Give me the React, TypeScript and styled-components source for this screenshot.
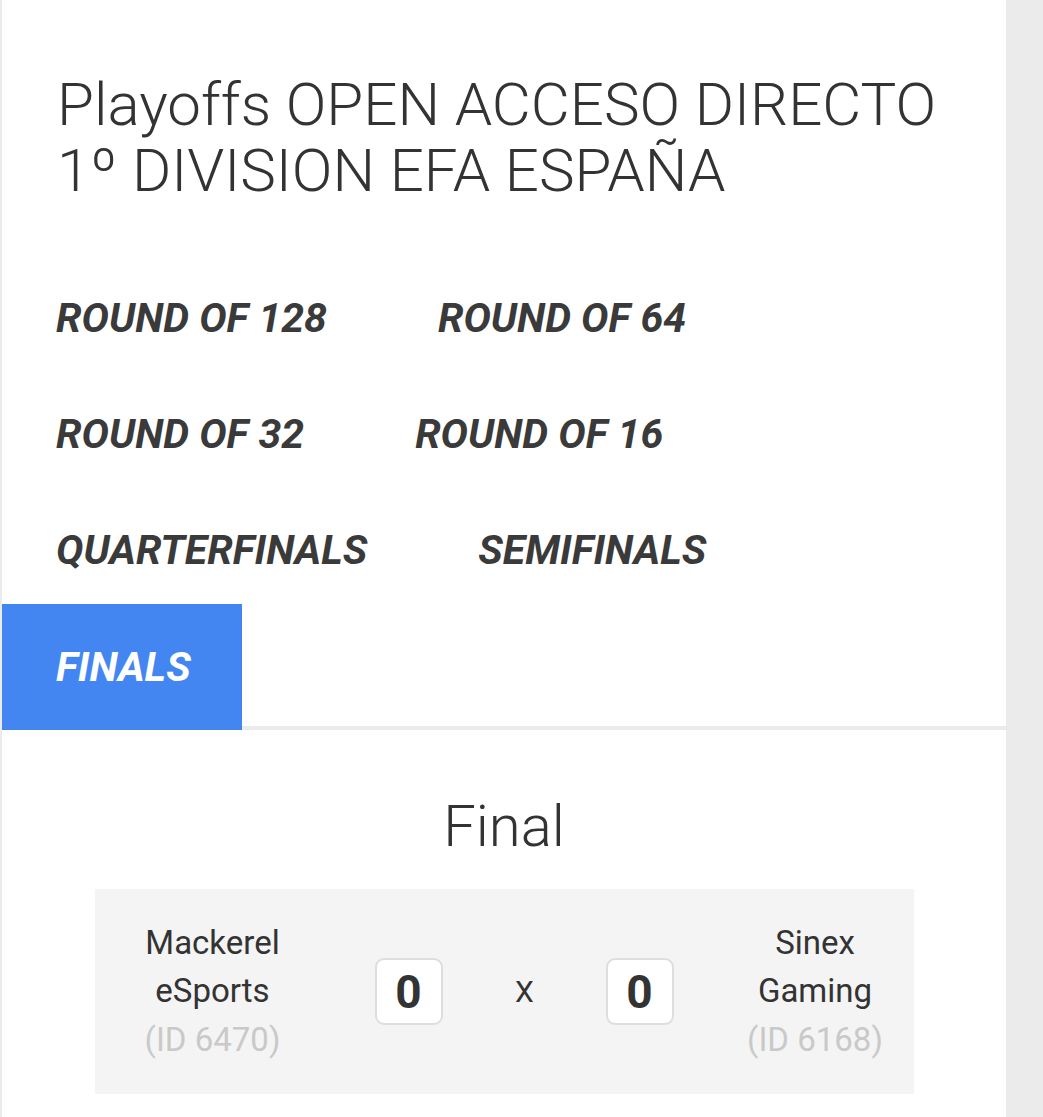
import { FC } from "react";
import styled, { createGlobalStyle } from "styled-components";

const GlobalStyle = createGlobalStyle`
  html, body {
    margin: 0;
    padding: 0;
    background: #ebebeb;
  }
  body {
    font-family: Roboto, "Liberation Sans", Arial, sans-serif;
    color: #333;
  }
`;

const Page = styled.div`
  width: 1006px;
  min-height: 1117px;
  background: #fff;
  border-left: 2px solid #ebebeb;
  box-sizing: border-box;
`;

const Title = styled.h1`
  margin: 0;
  padding: 72px 40px 0 55px;
  font-size: 60px;
  font-weight: 300;
  line-height: 66px;
  color: #333;
`;

const TabList = styled.div`
  display: flex;
  flex-direction: column;
  margin-top: 56px;
  padding-bottom: 2px;
`;

const Divider = styled.div`
  height: 4px;
  background: #ebebeb;
`;

const Row = styled.div`
  display: flex;
`;

const Tab = styled.div<{ $active?: boolean }>`
  display: flex;
  align-items: center;
  box-sizing: border-box;
  height: ${(p) => (p.$active ? "126px" : "116px")};
  margin: ${(p) => (p.$active ? "-4px 0 -6px 0" : "0")};
  padding: 0 ${(p) => (p.$active ? 51 : 57)}px 0 54px;
  font-size: 41px;
  font-weight: 700;
  font-style: italic;
  color: ${(p) => (p.$active ? "#fff" : "#3a3a3a")};
  background: ${(p) => (p.$active ? "#4386f2" : "transparent")};
  position: relative;
  z-index: 1;
  cursor: pointer;
`;

const Section = styled.section`
  padding: 62px 0 0;
  display: flex;
  flex-direction: column;
  align-items: center;
`;

const StageName = styled.h2`
  margin: 0;
  font-size: 58px;
  font-weight: 300;
  line-height: 68px;
  color: #333;
`;

const Match = styled.div`
  margin-top: 29px;
  width: 819px;
  height: 205px;
  background: #f4f4f4;
  display: grid;
  grid-template-columns: 236px 156px 76px 154px 197px;
  align-items: center;
  justify-items: center;
`;

const Team = styled.div`
  text-align: center;
  font-size: 33px;
  line-height: 48.5px;
  color: #333;
`;

const TeamId = styled.div`
  color: #c9c9c9;
`;

const Score = styled.div`
  width: 68px;
  height: 67px;
  box-sizing: border-box;
  border: 2px solid #dedede;
  border-radius: 9px;
  background: #fff;
  display: flex;
  align-items: center;
  justify-content: center;
  font-size: 46px;
  font-weight: 700;
  color: #333;
`;

const Versus = styled.div`
  font-size: 30px;
  color: #333;
`;

type TeamInfo = { name: string[]; id: number };

const TeamCell: FC<{ team: TeamInfo }> = ({ team }) => (
  <Team>
    {team.name.map((line) => (
      <div key={line}>{line}</div>
    ))}
    <TeamId>(ID {team.id})</TeamId>
  </Team>
);

const rounds = [
  ["ROUND OF 128", "ROUND OF 64"],
  ["ROUND OF 32", "ROUND OF 16"],
  ["QUARTERFINALS", "SEMIFINALS"],
  ["FINALS"],
];
const activeRound = "FINALS";

const home: TeamInfo = { name: ["Mackerel", "eSports"], id: 6470 };
const away: TeamInfo = { name: ["Sinex", "Gaming"], id: 6168 };

export default function App() {
  return (
    <>
      <GlobalStyle />
      <Page>
        <Title>
          Playoffs OPEN ACCESO DIRECTO
          <br />1º DIVISION EFA ESPAÑA
        </Title>

        <TabList>
          {rounds.map((row, i) => (
            <Row key={i}>
              {row.map((label) => (
                <Tab key={label} $active={label === activeRound}>
                  {label}
                </Tab>
              ))}
            </Row>
          ))}
        </TabList>
        <Divider />

        <Section>
          <StageName>Final</StageName>
          <Match>
            <TeamCell team={home} />
            <Score>0</Score>
            <Versus>X</Versus>
            <Score>0</Score>
            <TeamCell team={away} />
          </Match>
        </Section>
      </Page>
    </>
  );
}
